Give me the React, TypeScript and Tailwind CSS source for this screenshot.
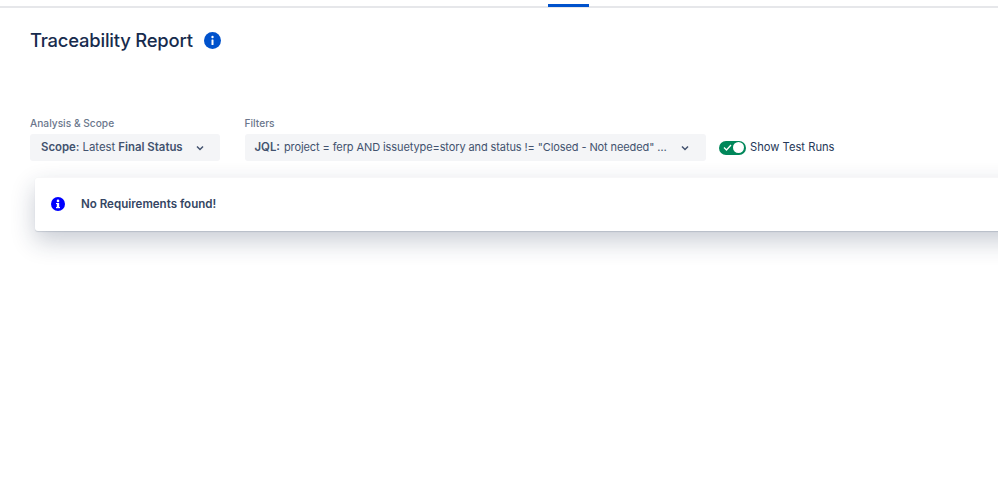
export default function App() {
  return (
    <div className="w-[998px] h-[500px] overflow-hidden bg-white font-['Inter',sans-serif]">
      <div className="h-[8px] border-b-2 border-[#e6e7ea] flex">
        <div className="ml-[548px] w-[41px] h-[3px] mt-[4px] bg-[#0052cc]" />
      </div>
      <div className="pl-[30px] pt-[18px] flex items-center h-[28px] box-content">
        <h1 className="text-[18.4px] leading-[28px] font-medium text-[#172b4d] tracking-[-0.2px]">Traceability Report</h1>
        <svg className="ml-[11px]" width="17" height="17" viewBox="0 0 17 17">
          <circle cx="8.5" cy="8.5" r="8.5" fill="#0052cc" />
          <rect x="7.5" y="7.5" width="2" height="5.5" rx="0.5" fill="#fff" />
          <circle cx="8.5" cy="5" r="1.2" fill="#fff" />
        </svg>
      </div>
      <div className="pl-[30px] mt-[62px] flex items-end">
        <div className="flex flex-col">
          <span className="text-[10.2px] leading-[14px] font-medium text-[#6b778c]">Analysis &amp; Scope</span>
          <div className="mt-[4px] w-[190px] h-[27px] bg-[#f4f5f7] rounded-[3px] flex items-center pl-[11px] text-[11.4px] text-[#42526e] whitespace-nowrap">
            <b className="font-semibold">Scope:</b>
            <span className="ml-[3px]">Latest</span>
            <b className="ml-[3px] font-semibold">Final Status</b>
            <svg className="ml-[13px]" width="8" height="6" viewBox="0 0 8 6" fill="none">
              <path d="M1 1.5 L4 4.5 L7 1.5" stroke="#42526e" strokeWidth="1.5" />
            </svg>
          </div>
        </div>
        <div className="flex flex-col ml-[24.5px]">
          <span className="text-[10.2px] leading-[14px] font-medium text-[#6b778c]">Filters</span>
          <div className="mt-[4px] w-[461px] h-[27px] bg-[#f4f5f7] rounded-[3px] flex items-center pl-[10px] text-[11.4px] text-[#42526e] whitespace-nowrap">
            <b className="font-semibold">JQL:</b>
            <span className="ml-[4px] w-[382px] text-[11px] tracking-[-0.1px]">project = ferp AND issuetype=story and status != "Closed - Not needed" …</span>
            <svg className="ml-[15px]" width="8" height="6" viewBox="0 0 8 6" fill="none">
              <path d="M1 1.5 L4 4.5 L7 1.5" stroke="#42526e" strokeWidth="1.5" />
            </svg>
          </div>
        </div>
        <div className="ml-[13px] h-[27px] flex items-center">
          <div className="w-[27px] h-[14px] rounded-full bg-[#00875a] flex items-center justify-between pl-[4px] pr-[1.5px]">
            <svg width="9" height="7" viewBox="0 0 9 7" fill="none">
              <path d="M1 3.5 L3.5 6 L8 1" stroke="#fff" strokeWidth="1.3" />
            </svg>
            <div className="w-[11px] h-[11px] rounded-full bg-white" />
          </div>
          <span className="ml-[4.5px] text-[11.2px] text-[#253858]">Show Test Runs</span>
        </div>
      </div>
      <div className="ml-[35px] mt-[16px] w-[1000px] h-[54px] bg-white rounded-l-[3px] border-t border-[#f7f7f8] shadow-[0_10px_24px_rgba(23,43,77,0.24),0_1px_1px_rgba(23,43,77,0.14)] flex items-center pl-[16px]">
        <svg className="mb-[1px]" width="14" height="14" viewBox="0 0 14 14">
          <circle cx="7" cy="7" r="7" fill="#0000ff" />
          <rect x="5.8" y="6" width="2.4" height="5" fill="#fff" />
          <rect x="5" y="10" width="4" height="1.2" fill="#fff" />
          <rect x="5" y="6" width="2" height="1" fill="#fff" />
          <circle cx="7" cy="3.9" r="1.3" fill="#fff" />
        </svg>
        <span className="ml-[16px] text-[11.55px] font-semibold text-[#344563]">No Requirements found!</span>
      </div>
    </div>
  );
}
